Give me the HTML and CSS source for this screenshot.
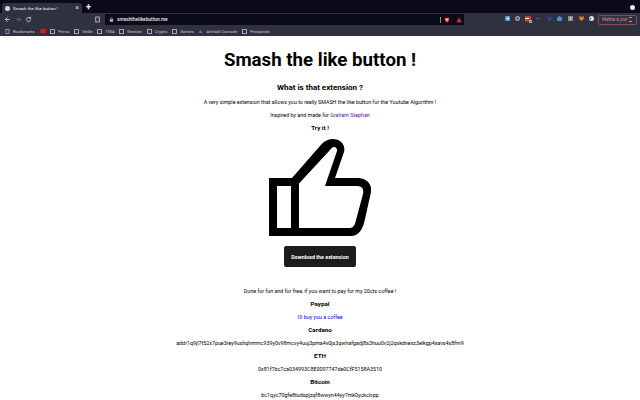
FILE: index.html
```html
<!DOCTYPE html>
<html lang="en">
<head>
  <meta charset="UTF-8">
  <title>Smash the like button !</title>
  <link rel="stylesheet" href="styles.css">
</head>
<body>
  <div class="tabstrip">
    <div class="tab">
      <span class="favicon"></span>
      <span class="tab-title">Smash the like button !</span>
      <span class="tab-close">×</span>
    </div>
    <span class="new-tab">+</span>
    <span class="spacer"></span>
    <span class="profile-dot"></span>
  </div>

  <div class="toolbar">
    <svg class="nav-icon" viewBox="0 0 10 10"><path d="M8 5H2M5 2L2 5l3 3" fill="none" stroke="#d8d8de" stroke-width="1.200"/></svg>
    <svg class="nav-icon" viewBox="0 0 10 10"><path d="M2 5h6M5 2l3 3-3 3" fill="none" stroke="#666a76" stroke-width="1.200"/></svg>
    <svg class="nav-icon" viewBox="0 0 10 10"><path d="M8 5a3 3 0 1 1-1-2.200M8 1v2.400H5.600" fill="none" stroke="#d8d8de" stroke-width="1.100"/></svg>
    <svg class="nav-icon bookmark-page" viewBox="0 0 10 10"><rect x="2.500" y="1.500" width="5" height="7" fill="none" stroke="#d8d8de" stroke-width="1.100"/></svg>
    <div class="omnibox">
      <svg class="lock" viewBox="0 0 6 6"><rect x="1" y="2.600" width="4" height="3" fill="#b8bac2"/><path d="M2 2.800V1.600a1 1 0 0 1 2 0v1.200" fill="none" stroke="#b8bac2" stroke-width=".7"/></svg>
      <span class="url">smashthelikebutton.me</span>
      <span class="spacer"></span>
      <span class="omni-sep"></span>
      <svg class="omni-icon" viewBox="0 0 8 8"><path d="M1 1h6l-.5 4L4 7.600 1.500 5z" fill="#f0562a"/><rect x="3" y="2.500" width="2" height="2" fill="#fff"/></svg>
      <svg class="omni-icon" viewBox="0 0 8 8"><path d="M4 .8L7.600 7H.4z" fill="#d8304a"/><path d="M4 3.500L5.600 7H2.400z" fill="#5a3fb0"/></svg>
    </div>
    <div class="extensions">
      <svg class="ext" viewBox="0 0 6 6"><rect width="6" height="6" rx="1" fill="#4a9be0"/><rect x="2" y="2" width="3" height="2" fill="#fff"/></svg>
      <svg class="ext" viewBox="0 0 6 6"><circle cx="3" cy="3" r="3" fill="#a0a2aa"/><circle cx="3" cy="3" r="1.200" fill="#34364a"/></svg>
      <svg class="ext ext-wide" viewBox="0 0 7 7"><rect width="6" height="5.500" rx=".5" fill="#d83838"/><rect y="2" width="4" height="1" fill="#fff"/><rect x="4" y="4" width="3" height="3" fill="#9a9ca4"/></svg>
      <svg class="ext" viewBox="0 0 6 6"><path d="M0 2h4l2 1v1H0z" fill="#1f6e35"/></svg>
      <svg class="ext" viewBox="0 0 6 6"><path d="M0 0l3 2 3-2-1 4-2 2-2-2z" fill="#2c4aa0"/></svg>
      <svg class="ext" viewBox="0 0 6 6"><path d="M2 0h2v1.500h2V6H0V1.500h2z" fill="#4a90d0"/></svg>
      <svg class="ext" viewBox="0 0 6 6"><rect width="6" height="6" fill="#8a8c94"/><rect x="2" y="1.500" width="2" height="3" fill="#c8c8d0"/></svg>
      <svg class="ext" viewBox="0 0 6 6"><path d="M0 0l2 1h2l2-1-.5 4L3 6 .5 4z" fill="#e08030"/></svg>
      <svg class="ext" viewBox="0 0 6 6"><circle cx="3" cy="3" r="3" fill="#e4e4e8"/><path d="M0 4l2-2 1 2z" fill="#34364a"/></svg>
    </div>
    <div class="update">Mettre à jour <span class="update-menu"></span></div>
  </div>

  <div class="bookmarks">
    <span class="bm"><svg class="bm-icon" viewBox="0 0 8 8"><rect x="1.500" y="1" width="5" height="6" fill="none" stroke="#c8c8d0"/></svg>Bookmarks</span>
    <span class="bm"><span class="yt"></span></span>
    <span class="bm"><span class="folder"></span>Perso</span>
    <span class="bm"><span class="folder"></span>Veille</span>
    <span class="bm"><span class="folder"></span>TMA</span>
    <span class="bm"><span class="folder"></span>Gestion</span>
    <span class="bm"><span class="folder"></span>Crypto</span>
    <span class="bm"><span class="folder"></span>Games</span>
    <span class="bm"><svg class="bm-icon" viewBox="0 0 8 8"><path d="M4 1.500L7.500 6.500H.5z" fill="#5b62c8"/></svg>Artifakt Console</span>
    <span class="bm"><span class="folder"></span>Prospects</span>
  </div>

  <main class="page">
    <h1>Smash the like button !</h1>
    <h2>What is that extension ?</h2>
    <p>A very simple extension that allows you to really SMASH the like button for the Youtube Algorithm !</p>
    <p>Inspired by and made for <a class="visited" href="#">Graham Stephan</a></p>
    <h3>Try it !</h3>
    <svg class="thumb" viewBox="0 0 102 97">
      <path fill="#000" fill-rule="evenodd" d="M0 39H23L52.700 5C56 1.500 60 0 64 0C71 0 77 5.500 75 13L66 39H89C97 39 103.500 45 102 53L96 80C94 90 90 97 82 97H0Z M8 47V89H22V47Z M30 44.500V89H81C84 89 86 86 87 81L94 55C95 50 93 47 88 47H56L68 12C68.500 9 66 7 63.500 8.500C62.500 9 62 10 61 11Z"/>
    </svg>
    <button class="download">Download the extension</button>
    <p class="coffee">Done for fun and for free, if you want to pay for my 20cts coffee !</p>
    <h3>Paypal</h3>
    <p class="after-title"><a href="#">I'll buy you a coffee</a></p>
    <h3>Cardano</h3>
    <p class="after-title">addr1q9jl7t52x7pue3rey9ushqhmmc939y0v98mcvy4uuj3pma4v0js3qwhafgadj8s3huu0v2j2qxkdnexz3elkgp4xavs4s8fm9</p>
    <h3>ETH</h3>
    <p class="after-title">0x81f7bc7ca034993C8E0097747de0CfF5158A3510</p>
    <h3>Bitcoin</h3>
    <p class="after-title">bc1qyc70gfe8tudspjzqf8wwyn44yy7mk0yckclvpp</p>
  </main>
</body>
</html>
```

FILE: styles.css
```css
* {
  box-sizing: border-box;
}

html,
body {
  margin: 0;
  height: 400px;
  overflow: hidden;
}

body {
  font-family: Roboto, "Liberation Sans", sans-serif;
  background: #fff;
}

.spacer {
  flex: 1;
}

/* browser chrome */
.tabstrip {
  height: 13px;
  display: flex;
  align-items: flex-end;
  background: #0a0a18;
  padding: 0 5px 0 2px;
}

.tab {
  width: 80px;
  height: 10px;
  display: flex;
  align-items: center;
  gap: 3px;
  padding: 0 3px;
  background: #2f313f;
  border-radius: 3px 3px 0 0;
  color: #d8d8e0;
  font-size: 4.400px;
}

.favicon {
  width: 5px;
  height: 5px;
  border-radius: 50%;
  background: #d8d8e0;
}

.tab-title {
  flex: 1;
  font-weight: 500;
  white-space: nowrap;
}

.tab-close {
  font-size: 7px;
  line-height: 7px;
}

.new-tab {
  margin-left: 4px;
  color: #fff;
  font-size: 9px;
  line-height: 11px;
  font-weight: 700;
}

.profile-dot {
  width: 5px;
  height: 5px;
  margin-bottom: 3px;
  border-radius: 50%;
  background: #e8e8ec;
}

.toolbar {
  height: 13px;
  display: flex;
  align-items: center;
  background: #2f313f;
  padding: 0 3px 0 4px;
}

.nav-icon {
  width: 7px;
  height: 7px;
  margin-right: 3.500px;
}

.bookmark-page {
  margin-left: 58px;
  margin-right: 4.500px;
}

.omnibox {
  width: 359px;
  height: 11px;
  display: flex;
  align-items: center;
  gap: 3px;
  padding: 0 2px 0 4px;
  background: #0c0c18;
}

.lock {
  width: 5px;
  height: 5px;
}

.url {
  color: #e8e8ec;
  font-size: 4.800px;
  font-weight: 500;
}

.omni-sep {
  width: 1px;
  height: 6px;
  background: #888;
}

.omni-icon {
  width: 6px;
  height: 6px;
}

.omni-icon + .omni-icon {
  margin-left: 3px;
}

.extensions {
  display: flex;
  gap: 5.600px;
  margin-left: 40.500px;
  flex: 1;
}

.ext {
  width: 5px;
  height: 5px;
}

.ext-wide {
  width: 7px;
  height: 7px;
  margin: 0 -1px;
}

.update {
  width: 39px;
  height: 10px;
  display: flex;
  align-items: center;
  justify-content: space-between;
  padding: 0 3px;
  border: 1px solid #8a4a52;
  border-radius: 2px;
  color: #d88a8a;
  font-size: 4.500px;
  white-space: nowrap;
}

.update-menu {
  width: 3px;
  height: 5px;
  margin-right: 1px;
  border-top: 1px solid #d88a8a;
  border-bottom: 1px solid #d88a8a;
}

.bookmarks {
  height: 10px;
  display: flex;
  align-items: center;
  gap: 4.800px;
  background: #2f313f;
  padding: 0 5px;
  color: #c8c8d0;
  font-size: 4.300px;
}

.bm {
  display: flex;
  align-items: center;
  gap: 3px;
  white-space: nowrap;
}

.bm-icon {
  width: 5px;
  height: 5px;
}

.folder {
  width: 5px;
  height: 5px;
  border: 1px solid #a4a4b0;
}

.yt {
  width: 6px;
  height: 4px;
  border-radius: 1px;
  background: #d81818;
}

/* page */
.page {
  text-align: center;
  color: #000;
  font-size: 5.330px;
  line-height: 6.400px;
}

h1 {
  margin: 0;
  padding-top: 12px;
  font-size: 18.670px;
  line-height: 24px;
  font-weight: 700;
}

h2 {
  margin: 10.500px 0 0;
  font-size: 8px;
  line-height: 10px;
  font-weight: 700;
}

h3 {
  margin: 6.800px 0 0;
  font-size: 6.240px;
  line-height: 7px;
  font-weight: 700;
}

p {
  margin: 6.500px 0 0;
}

p.after-title {
  margin-top: 5.800px;
}

a {
  color: #0000ee;
  text-decoration: none;
}

a.visited {
  color: #551a8b;
}

.thumb {
  display: block;
  width: 102px;
  height: 97px;
  margin: 7px auto 0;
}

.download {
  display: block;
  width: 72px;
  height: 21px;
  margin: 10px auto 0;
  border: 0;
  border-radius: 2px;
  background: #1c1c1c;
  color: #fff;
  font-family: inherit;
  font-size: 5.330px;
  font-weight: 700;
}

.coffee {
  margin-top: 21px;
}
```
